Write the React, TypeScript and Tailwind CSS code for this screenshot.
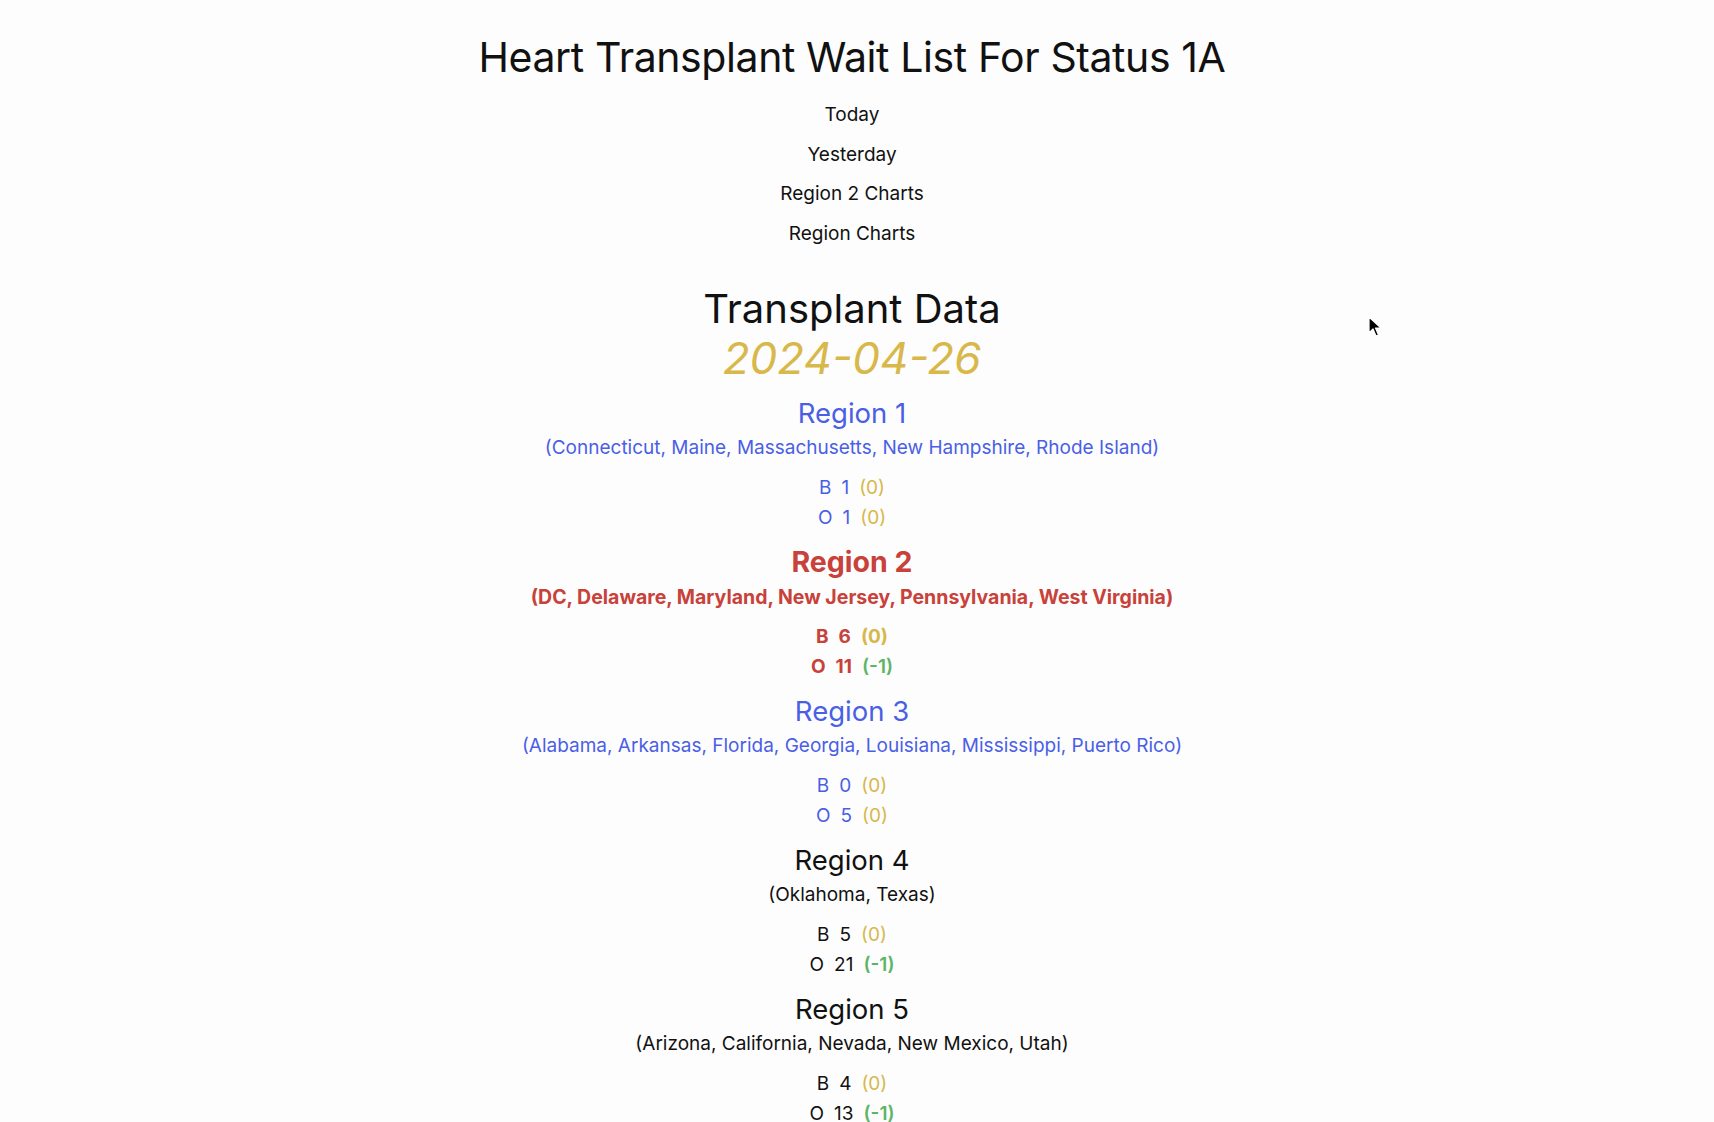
import React from 'react';

type Row = { type: string; count: number; delta: number };
type Region = { name: string; states: string; tone: 'blue' | 'red' | 'black'; rows: Row[] };

const regions: Region[] = [
  {
    name: 'Region 1',
    states: '(Connecticut, Maine, Massachusetts, New Hampshire, Rhode Island)',
    tone: 'blue',
    rows: [
      { type: 'B', count: 1, delta: 0 },
      { type: 'O', count: 1, delta: 0 },
    ],
  },
  {
    name: 'Region 2',
    states: '(DC, Delaware, Maryland, New Jersey, Pennsylvania, West Virginia)',
    tone: 'red',
    rows: [
      { type: 'B', count: 6, delta: 0 },
      { type: 'O', count: 11, delta: -1 },
    ],
  },
  {
    name: 'Region 3',
    states: '(Alabama, Arkansas, Florida, Georgia, Louisiana, Mississippi, Puerto Rico)',
    tone: 'blue',
    rows: [
      { type: 'B', count: 0, delta: 0 },
      { type: 'O', count: 5, delta: 0 },
    ],
  },
  {
    name: 'Region 4',
    states: '(Oklahoma, Texas)',
    tone: 'black',
    rows: [
      { type: 'B', count: 5, delta: 0 },
      { type: 'O', count: 21, delta: -1 },
    ],
  },
  {
    name: 'Region 5',
    states: '(Arizona, California, Nevada, New Mexico, Utah)',
    tone: 'black',
    rows: [
      { type: 'B', count: 4, delta: 0 },
      { type: 'O', count: 13, delta: -1 },
    ],
  },
];

const toneClass = {
  blue: 'text-[#4a5fe6]',
  red: 'text-[#c8413a] font-bold',
  black: 'text-[#111111]',
};

const nav = ['Today', 'Yesterday', 'Region 2 Charts', 'Region Charts'];

function RegionBlock({ region }: { region: Region }) {
  const tone = toneClass[region.tone];
  const isRed = region.tone === 'red';
  return (
    <section className={`mt-[13px] first:mt-[11px] flex flex-col items-center ${tone}`}>
      <h3 className={`${isRed ? 'text-[28.5px]' : 'text-[27.5px]'} leading-[32px]`}>{region.name}</h3>
      <p className={`mt-[6px] ${isRed ? 'text-[19.5px]' : 'text-[19px]'} leading-[26px]`}>{region.states}</p>
      <div className="mt-[12px] flex flex-col items-center text-[19px]">
        {region.rows.map((r) => (
          <div key={r.type} className="flex gap-[10px] leading-[30px]">
            <span>{r.type}</span>
            <span>{r.count}</span>
            <span className={r.delta < 0 ? 'text-[#5cb567] font-semibold' : 'text-[#d6b84c]'}>
              ({r.delta})
            </span>
          </div>
        ))}
      </div>
    </section>
  );
}

export default function App() {
  return (
    <div className="relative min-h-[1122px] bg-[#fdfdfd] pr-[10px] pt-[32px] text-center text-[#111111] font-['Inter','Liberation_Sans',sans-serif]">
      <h1 className="text-[41px] leading-[50px] tracking-[-0.01em]">Heart Transplant Wait List For Status 1A</h1>

      {/* Navigation */}
      <nav className="mt-[13px] flex flex-col items-center">
        {nav.map((item) => (
          <a key={item} href="#" className="text-[19px] leading-[39.5px]">
            {item}
          </a>
        ))}
      </nav>

      <h2 className="mt-[34px] text-[40px] leading-[44px]">Transplant Data</h2>
      <div className="text-[44px] leading-[55px] italic text-[#d8b84a]">2024-04-26</div>

      <div className="flex flex-col">
        {regions.map((r) => (
          <RegionBlock key={r.name} region={r} />
        ))}
      </div>

      {/* mouse pointer */}
      <svg className="absolute left-[1368px] top-[316px]" width="14" height="22" viewBox="0 0 14 22">
        <path d="M1 1 L1 17 L5 13 L8 20 L10.5 19 L7.5 12 L13 12 Z" fill="#000" stroke="#fff" strokeWidth="1.2" strokeLinejoin="round" />
      </svg>
    </div>
  );
}
